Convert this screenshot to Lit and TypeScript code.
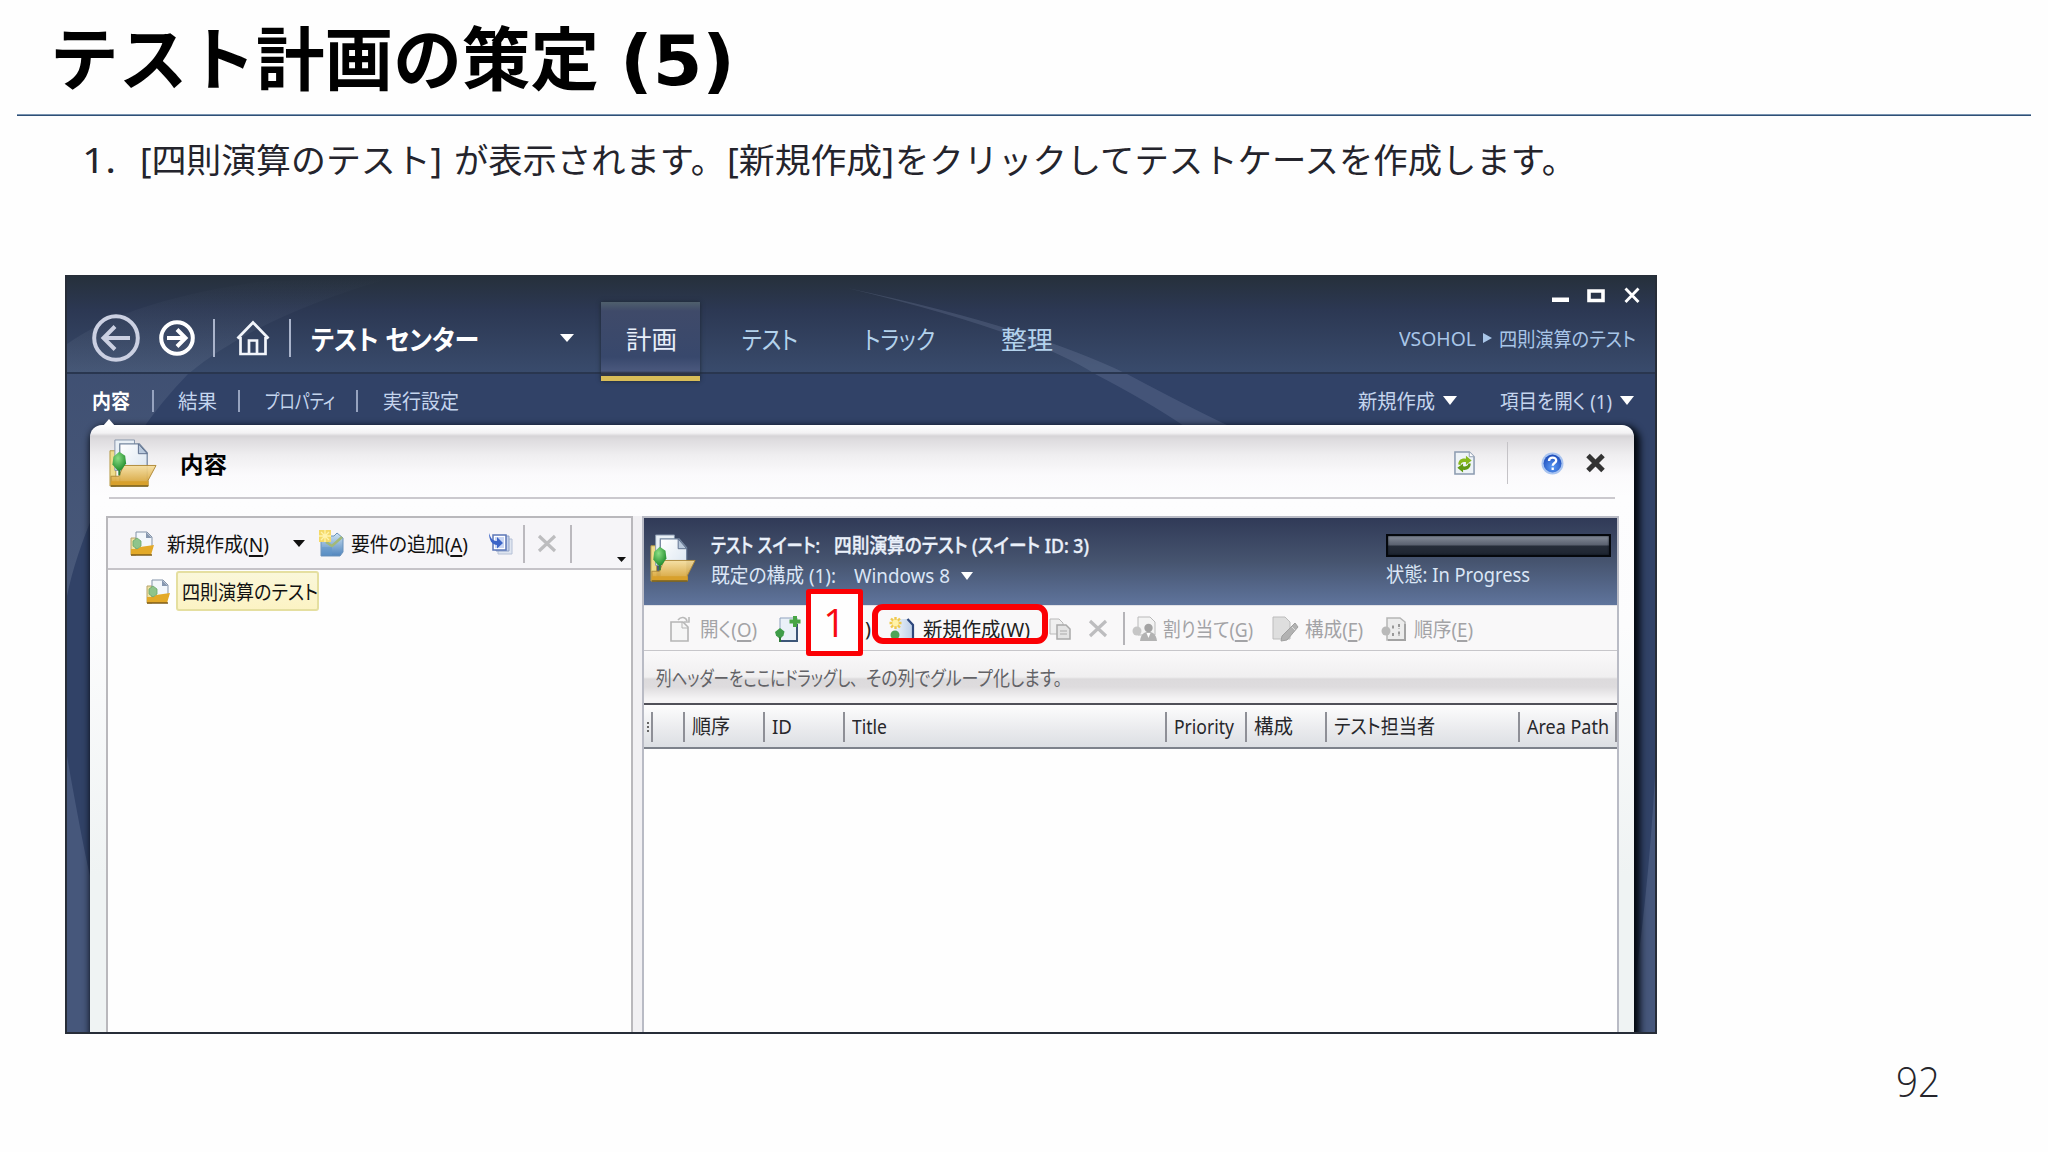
import { LitElement, html, svg, css, nothing } from "lit";
import { customElement, property } from "lit/decorators.js";

/** A single line of text squeezed or stretched to an exact width. */
@customElement("fit-text")
class FitText extends LitElement {
  @property({ type: Number }) w = 0;
  @property({ type: Number }) gap = 0;
  static styles = css`
    :host { display: block; flex: none; white-space: nowrap; }
    .run { display: inline-block; transform-origin: 0 50%; white-space: pre; }
  `;
  render() {
    return html`<span class="run"><slot></slot></span>`;
  }
  firstUpdated() {
    this.style.width = `${this.w}px`;
    this.style.marginLeft = `${this.gap}px`;
    const run = this.renderRoot.querySelector(".run") as HTMLElement;
    const natural = run.getBoundingClientRect().width;
    if (natural > 0) run.style.transform = `scaleX(${this.w / natural})`;
  }
}

const folder = svg`
  <defs>
    <linearGradient id="fg" x1="0" y1="0" x2="0" y2="1"><stop offset="0" stop-color="#f6dfa0"/><stop offset="1" stop-color="#d39a26"/></linearGradient>
    <linearGradient id="pg" x1="0" y1="0" x2="1" y2="1"><stop offset="0" stop-color="#ffffff"/><stop offset="1" stop-color="#d5e2ef"/></linearGradient>
    <radialGradient id="gg" cx=".4" cy=".35" r=".7"><stop offset="0" stop-color="#8ade84"/><stop offset="1" stop-color="#1e8a2c"/></radialGradient>
  </defs>
  <path d="M1 12h6v36H1z" fill="#efdc8c" stroke="#b59a45"/>
  <path d="M6 1h20v5H11v26H6z" fill="#e9f0f6" stroke="#8595ab"/>
  <path d="M11 5h20l8 9v30H11z" fill="url(#pg)" stroke="#74869f" stroke-width="1.3"/>
  <path d="M30 5v10h9z" fill="#b9c9dc" stroke="#5c6f8c"/>
  <path d="M2 38h8l5-11h33l-8 15v6H2z" fill="url(#fg)" fill-opacity=".93" stroke="#b08a3a"/>
  <path d="M2 43h38v5H2z" fill="#d8a02c"/>
  <path d="M2 48h38" stroke="#77601f" stroke-width="1.6"/>
  <path d="M10.500 30v7" stroke="#2f7f37" stroke-width="2"/>
  <path d="M10.500 13l6 4 1 8-5 7h-4l-5-6 1-8z" fill="url(#gg)"/>`;

const smallFolder = svg`
  <path d="M1 7h5v17H1z" fill="#eee3a4" stroke="#b8a468"/>
  <path d="M6 1h11l5 5v12H6z" fill="#f3f7fb" stroke="#8393a8"/>
  <path d="M16 1v6h6z" fill="#8798b0"/>
  <path d="M1 18h6l3-2 14-2-3 10H1z" fill="#e3a928"/>
  <path d="M1 24h21" stroke="#7e5d18" stroke-width="1.5"/>
  <path d="M7 7l4 3v5l-4 3-4-3v-5z" fill="#8fc48b" stroke="#6aa768" stroke-width=".8"/>`;

const cross = (c: string) => svg`<path d="M3 3L19 18M19 3L3 18" stroke=${c} stroke-width="3.2" fill="none"/>`;

const glyphs: Record<string, unknown> = {
  folder,
  smallFolder,
  back: svg`<circle cx="24" cy="24" r="21.8" fill="none" stroke="#cbd0e2" stroke-width="4"/><path d="M38 24H12M23 12.500L11.500 24L23 35.500" fill="none" stroke="#cbd0e2" stroke-width="4"/>`,
  forward: svg`<circle cx="18" cy="18" r="15.800" fill="none" stroke="#fff" stroke-width="4"/><path d="M8 18H26M18 9.500L26.500 18L18 26.500" fill="none" stroke="#fff" stroke-width="4"/>`,
  home: svg`<path d="M1.500 18.500L17 2.500L32.500 18.500M4.500 17V34H29.500V17M13 34V20.500H21V34" fill="none" stroke="#f2f5fb" stroke-width="2.700"/>`,
  refresh: svg`<path d="M1 1h15l5 5v18H1z" fill="#eef3f7" stroke="#8c9bb0" stroke-width="1.600"/><path d="M16 1v5h5" fill="#fff" stroke="#8c9bb0"/><path d="M4.500 14c0-5 4-7 8-6V5l6 5-6 4.500v-3c-3-.5-5 0-5.500 3z" fill="#86b81c"/><path d="M17.500 13c0 5-4 7.500-8 6.500v3l-6-5 6-4.500v3c3 .3 5-.3 5.500-3z" fill="#5f9a14"/>`,
  help: svg`<defs><radialGradient id="hg" cx=".5" cy=".7" r=".7"><stop offset="0" stop-color="#5a9af4"/><stop offset="1" stop-color="#1b49b8"/></radialGradient></defs><circle cx="11.500" cy="11.500" r="11" fill="#a9c4f0"/><circle cx="11.500" cy="11.500" r="9" fill="url(#hg)"/><path d="M8 9c0-4.500 7.500-4.500 7.200-.2-.2 2.200-3.500 2.400-3.500 5M11.700 15.500v2.500" fill="none" stroke="#fff" stroke-width="2.300"/>`,
  closePanel: svg`<path d="M2 2.500L17 17.500M17 2.500L2 17.500" stroke="#333" stroke-width="5"/>`,
  requirement: svg`<defs><linearGradient id="rg" x1="0" y1="0" x2="0" y2="1"><stop offset="0" stop-color="#cfe3f2"/><stop offset="1" stop-color="#4f84bd"/></linearGradient></defs><path d="M2 6h13l3-3 6 5v14l-3 4H2z" fill="url(#rg)" stroke="#6b93bb"/><path d="M7 12l6 4 10-9" stroke="#a3b978" stroke-width="2.500" fill="none"/><path d="M0 0h12v12H0z" fill="#f4d968"/><path d="M6 0v12M0 6h12M2 2l8 8M10 2l-8 8" stroke="#fff3ae" stroke-width="1.300"/><path d="M3 17h10v8H3z" fill="#5f96c9" fill-opacity=".5"/>`,
  stack: svg`<path d="M9 6h14v15H9z" fill="#dfe5f0" stroke="#b4c0d6"/><path d="M7 3h13v15H7z" fill="#c7d3ea" stroke="#8fa1c6"/><path d="M4 2h13v15H4z" fill="#fff" stroke="#5b76b6" stroke-width="1.500"/><path d="M6 4h9v11H6z" fill="#c9d6f4"/><path d="M0 0c2 6 4 8 8 8V4l6 6-6 5.500V12C3 12 0 7 0 0z" fill="#3c65c8"/>`,
  cross: cross("#bdbdbf"),
  open: svg`<path d="M1 6h12l5 5v14H1z" fill="#f6f6f6" stroke="#b5b5b5" stroke-width="1.600"/><path d="M12 6v6h6" fill="none" stroke="#b5b5b5"/><path d="M8 4c3-4 8-3 9 1M19 1v5h-5" fill="none" stroke="#b9b9b9" stroke-width="1.600"/>`,
  addCase: svg`<path d="M5 2h17v23H5z" fill="#eaf1f8" stroke="#8fa3be"/><path d="M22 8v17H6" stroke="#3d5678" stroke-width="2" fill="none"/><path d="M20 0v11M14.500 5.500h11" stroke="#49a645" stroke-width="4"/><path d="M5 12l4.500 3.500-1 4-3.500 3.500-4-3.500L0 16z" fill="#3f9d49"/><path d="M5 21v5" stroke="#2f7a38" stroke-width="2"/>`,
  newCase: svg`<defs><linearGradient id="ng"><stop offset="0" stop-color="#eef4fb"/><stop offset="1" stop-color="#b9cce6"/></linearGradient></defs><path d="M6 2h13l6 6v17H6z" fill="url(#ng)"/><path d="M18.500 2l5.500 6v17" stroke="#2e477c" stroke-width="2.200" fill="none"/><path d="M6.500 0v12M.500 6h12M2 1.500l9 9M11 1.500l-9 9" stroke="#f0c94c" stroke-width="2.400"/><circle cx="6.500" cy="6" r="3.200" fill="#fff2a8"/><circle cx="6" cy="18" r="4.500" fill="#4da457"/>`,
  copy: svg`<path d="M1 1h9l4 4v11H1z" fill="#efefef" stroke="#b9b9b9"/><path d="M8 7h9l4 4v10H8z" fill="#e4e4e4" stroke="#a9a9a9" stroke-width="1.500"/><path d="M11 13h7M11 16h7" stroke="#aaa"/>`,
  assign: svg`<path d="M6 1h12l5 5v13H6z" fill="#f3f3f3" stroke="#b9b9b9"/><circle cx="5" cy="15" r="4.500" fill="#c6c6c6"/><circle cx="16.500" cy="12" r="4.200" fill="#a3a3a3"/><path d="M8 25c1-8 5-9 8.500-9s7.500 1 8.500 9z" fill="#b3b3b3"/><path d="M14.500 17l2 5 2-5z" fill="#fff"/>`,
  configure: svg`<path d="M1 1h12l5 5v17H1z" fill="#dedede" stroke="#bcbcbc"/><path d="M23 7l3 4-11 13-6 1 1-5z" fill="#b2b2b2" stroke="#a0a0a0"/><path d="M20 11l3 3" stroke="#ddd"/>`,
  order: svg`<path d="M6 2h13l5 4v18H6z" fill="#ececec" stroke="#b5b5b5" stroke-width="1.500"/><path d="M24 8v16H7" stroke="#a3a3a3" stroke-width="2" fill="none"/><circle cx="5" cy="15" r="4.500" fill="#b9b9b9"/><path d="M12 9.500v4M18 8v4.500M12 17v4M18 15.500v4.500" stroke="#999" stroke-width="2" stroke-dasharray="3 1" fill="none"/>`,
  down: svg`<path d="M0 0H14L7 9z" fill="currentColor"/>`,
  right: svg`<path d="M0 0V11L10 5.500z" fill="currentColor"/>`,
  min: svg`<path d="M0 10.500H17V15H0z" fill="#fff"/>`,
  max: svg`<path d="M2 4H16V13.500H2z" fill="none" stroke="#fff" stroke-width="3.600"/>`,
  closeWin: svg`<path d="M1.500 1.500L14.500 15M14.500 1.500L1.500 15" stroke="#fff" stroke-width="2.800"/>`,
};

/** Named pictogram with its design box. */
@customElement("ui-icon")
class UiIcon extends LitElement {
  @property() name = "";
  @property({ type: Number }) w = 24;
  @property({ type: Number }) h = 24;
  @property({ type: Number }) gap = 0;
  @property() box = "";
  static styles = css`
    :host { display: block; flex: none; }
    svg { display: block; overflow: visible; }
  `;
  willUpdate() {
    this.style.marginLeft = `${this.gap}px`;
  }
  render() {
    return html`<svg width=${this.w} height=${this.h} viewBox=${this.box || `0 0 ${this.w} ${this.h}`} preserveAspectRatio="none">${glyphs[this.name]}</svg>`;
  }
}

@customElement("app-root")
class AppRoot extends LitElement {
  static styles = css`
    :host {
      display: block; width: 2048px; height: 1152px; background: #fefefe; overflow: hidden; position: relative;
      font-family: "Noto Sans", "Noto Sans CJK JP", sans-serif; font-size: 20px; color: #111;
    }
    * { box-sizing: border-box; }
    u { text-underline-offset: 3px; text-decoration-thickness: 1.5px; }
    .row { display: flex; align-items: center; }
    .title { height: 114px; padding: 8px 0 0 50px; font: 700 69px/114px "DejaVu Sans", "Noto Sans CJK JP", sans-serif; color: #000; }
    .rule { height: 2px; margin: 0 17px; background: #2f4f76; border-top: 1px solid #7893b0; }
    .step { height: 88px; padding-left: 82px; font: 400 34px/88px "Noto Sans", "Noto Sans CJK JP", sans-serif; color: #24242c; }
    .window {
      position: relative; margin: 71px 0 0 65px; width: 1592px; height: 759px; overflow: hidden;
      border: solid #272d38; border-width: 1px 2px 2px 2px; background: #314267; color: #e3ebf8;
      font-feature-settings: "palt";
    }
    .sweep { position: absolute; left: 0; top: 0; }
    .chrome { position: relative; height: 149px; }
    .bar { height: 98px; position: relative; }
    .brand { font-size: 27px; font-weight: 700; color: #fff; }
    .vsep { flex: none; width: 2px; height: 38px; background: #aab4cb; }
    .nav { height: 98px; padding: 26px 0 0 25px; align-items: center; }
    .tab { flex: none; width: 99px; height: 79px; margin: 0 0 0 27px; padding: 2px 0 0 25px; border-bottom: 5px solid #d9bd58; line-height: 71px; color: #e8effb;
      background: linear-gradient(#4f5f6c 0, #3f4a69 9px, #38486c 55px, #4a587d 69px, #2f3546 71px, #2f3546 74px);
      box-shadow: 0 0 4px #1c2631; align-self: flex-start; }
    .nav { font-size: 25px; color: #b3d2ec; }
    .path { font-size: 20px; color: #a9c6e8; }
    .winbtns { position: absolute; right: 15px; top: 11px; display: flex; }
    .sub { height: 51px; padding: 2px 0 0 25px; font-size: 20px; color: #c5d5ee; }
    .sub .on { font-weight: 700; color: #fff; }
    .sub .vsep { height: 22px; background: #96a3bf; }
    .white { color: #fff; }
    .panel { position: relative; margin-left: 23px; width: 1544px; height: 620px; border-radius: 12px 12px 0 0;
      background: linear-gradient(#fff 0, #f3f2f4 8px, #d6d4d7 11px, #dedcdf 15px, #efeef0 30px, #fbfafc 50px, #fdfdfe 72px, #fcfcfd 200px, #eff3f3 450px);
      box-shadow: 3px 4px 7px 3px #03080f; color: #111; }
    .pointer { position: absolute; left: 13px; top: -6px; width: 12px; height: 7px; background: #fff; clip-path: polygon(50% 0, 100% 100%, 0 100%); }
    .head { height: 74px; margin: 0 19px 0 19px; border-bottom: 2px solid #cbc9ce; padding-top: 4px; }
    .head .name { font-size: 22.500px; font-weight: 700; color: #000; }
    .head .vsep { width: 1px; height: 42px; background: #c5c3c7; }
    .panes { display: flex; margin: 17px 0 0 16px; height: 532px; background: #f1f0f3; width: 1513px; justify-content: space-between; }
    .left { width: 527px; border: 2px solid #b9b8bc; border-bottom: 0; background: #fefefe; }
    .tools { height: 52px; background: #f6f5f8; border-bottom: 2px solid #c5c3c8; padding: 1px 0 0 22px; }
    .tools .vsep { height: 38px; background: #bbb9be; width: 2px; }
    .tree { padding: 1px 0 0 38px; }
    .chosen { margin-left: 5px; width: 143px; height: 40px; padding-left: 4px; line-height: 39px; border: 2px solid #e5dfa0; border-radius: 3px; background: linear-gradient(#faf7da, #fcf3c4); }
    .right { width: 977px; border: solid #b9bbc5; border-width: 2px 2px 0 2px; background: #fefefe; }
    .suite { height: 87px; padding-left: 6px; color: #eaf0fa; background: linear-gradient(#303a57, #46546f 50%, #5f749c); display: flex; }
    .suite .pic { height: 80px; }
    .lines { margin-left: 15px; width: 660px; padding-top: 15px; }
    .lines .row { height: 26px; line-height: 26px; }
    .lines .row + .row { height: 34px; color: #dbe6f6; }
    .strong { font-weight: 500; -webkit-text-stroke: .35px currentColor; }
    .state { margin-left: 15px; padding-top: 16px; color: #dbe6f6; line-height: 36px; }
    .gauge { width: 225px; height: 23px; border: 2px solid #05080d; background: linear-gradient(#858c99, #59606e 48%, #262d39 52%, #1e2531); box-shadow: inset 0 0 2px #0b1019; }
    .actions { height: 46px; padding: 1px 0 0 26px; background: #f9f8f9; border-top: 1px solid #e1e1e6; border-bottom: 1px solid #c7c6ca; color: #a3a3a6; }
    .actions .vsep { width: 2px; height: 33px; background: #b5b4b8; }
    .dark { color: #222; }
    .group { height: 54px; padding-left: 12px; color: #626266; border-bottom: 2px solid #505058; background: linear-gradient(#faf9fa, #f0eff0 26px, #dcdadc 28px, #dedcde 36px, #f5f4f5 48px); }
    .cols { height: 44px; padding-top: 1px; border-bottom: 2px solid #7d828b; background: linear-gradient(#fdfdfd, #e9eaed 60%, #dcdfe3); color: #27272b; line-height: 33px; }
    .cols .vsep { height: 30px; background: #8e8f96; }
    .grip { flex: none; margin-left: 3px; width: 2px; height: 10px; background: repeating-linear-gradient(#666 0 2px, transparent 2px 4px); }
    .badge { position: absolute; left: 806px; top: 589px; width: 57px; height: 67px; border: 5px solid #fb0004; border-radius: 3px; background: #fefefe; color: #f80a10; font: 400 39px/56px "Open Sans", sans-serif; text-align: center; }
    .ring { position: absolute; left: 872px; top: 604px; width: 176px; height: 40px; border: 6px solid #fb0004; border-radius: 11px; }
    .page { margin: 17px 0 0 1896px; font: 300 43px/60px "Open Sans", "Noto Sans", sans-serif; color: #25252b; }
  `;

  private sep(gap: number) {
    return html`<ui-icon name="" w="0" h="0" gap=${gap}></ui-icon><span class="vsep"></span>`;
  }

  private col(gap: number, label: string, w: number) {
    return html`${this.sep(gap)}${label ? html`<fit-text gap="7" w=${w}>${label}</fit-text>` : nothing}`;
  }

  render() {
    return html`
      <div class="title row"><fit-text w="549">テスト計画の策定</fit-text><fit-text gap="21" w="115">(5)</fit-text></div>
      <div class="rule"></div>
      <div class="step row"><fit-text w="34">1.</fit-text><fit-text gap="24" w="302">[四則演算のテスト]</fit-text><fit-text gap="12" w="271">が表示されます。</fit-text><fit-text gap="2" w="167">[新規作成]</fit-text><fit-text gap="1" w="681">をクリックしてテストケースを作成します。</fit-text></div>

      <div class="window">
        <svg class="sweep" width="1588" height="756">
          <defs>
            <linearGradient id="top" x1="0" y1="0" x2="0" y2="1"><stop offset="0" stop-color="#26303b"/><stop offset=".35" stop-color="#2c3853"/><stop offset="1" stop-color="#394b6c"/></linearGradient>
            <linearGradient id="fade" x1="0" y1="0" x2="0" y2="1"><stop offset="0" stop-color="#8d9bb0" stop-opacity="0"/><stop offset=".3" stop-color="#8d9bb0" stop-opacity=".16"/><stop offset="1" stop-color="#8d9bb0" stop-opacity=".26"/></linearGradient>
          </defs>
          <rect width="1588" height="97" fill="url(#top)"/>
          <path d="M0 68Q60 25 190 6L330 0Q190 40 121 98Q70 150 30 230Q8 280 0 320z" fill="url(#fade)"/>
          <path d="M0 480Q14 560 23 600V756H0z" fill="#46577b"/>
          <path d="M780 12Q960 50 1060 98Q1120 130 1162 150H1117Q1080 125 1028 98Q960 55 780 12z" fill="#8794b4" fill-opacity=".22"/>
          <path d="M1588 500Q1580 640 1560 756H1588z" fill="#46577b"/>
          <rect y="96" width="1588" height="2" fill="#29364f"/>
        </svg>
        <div class="chrome">
          <div class="winbtns">
            <ui-icon name="min" w="17" h="17"></ui-icon><ui-icon name="max" w="18" h="17" gap="18"></ui-icon><ui-icon name="closeWin" w="16" h="17" gap="19"></ui-icon>
          </div>
          <div class="bar nav row">
            <ui-icon name="back" w="48" h="48"></ui-icon>
            <ui-icon name="forward" w="36" h="36" gap="19"></ui-icon>
            ${this.sep(18)}
            <ui-icon name="home" w="34" h="36" gap="21"></ui-icon>
            ${this.sep(19)}
            <fit-text class="brand" gap="20" w="168">テスト センター</fit-text>
            <ui-icon name="down" w="14" h="8" gap="81" box="0 0 14 9" class="white"></ui-icon>
            <div class="tab"><fit-text w="51">計画</fit-text></div>
            <fit-text gap="42" w="56">テスト</fit-text>
            <fit-text gap="66" w="71">トラック</fit-text>
            <fit-text gap="66" w="52">整理</fit-text>
            <fit-text class="path" gap="346" w="77">VSOHOL</fit-text>
            <ui-icon name="right" w="9" h="10" gap="7" box="0 0 10 11" class="path"></ui-icon>
            <fit-text class="path" gap="7" w="137">四則演算のテスト</fit-text>
          </div>
          <div class="sub row">
            <fit-text class="on" w="38">内容</fit-text>${this.sep(22)}
            <fit-text gap="24" w="39">結果</fit-text>${this.sep(21)}
            <fit-text gap="25" w="70">プロパティ</fit-text>${this.sep(21)}
            <fit-text gap="25" w="76">実行設定</fit-text>
            <fit-text gap="899" w="77">新規作成</fit-text>
            <ui-icon name="down" w="14" h="9" gap="8" class="white"></ui-icon>
            <fit-text gap="43" w="112">項目を開く (1)</fit-text>
            <ui-icon name="down" w="14" h="9" gap="8" class="white"></ui-icon>
          </div>
        </div>
        <div class="panel">
          <div class="pointer"></div>
          <div class="head row">
            <ui-icon name="folder" w="48" h="49" box="0 0 49 50"></ui-icon>
            <fit-text class="name" gap="23" w="47">内容</fit-text>
            <ui-icon name="refresh" w="21" h="24" gap="1227" box="0 0 22 25"></ui-icon>
            ${this.sep(32)}
            <ui-icon name="help" w="23" h="23" gap="33"></ui-icon>
            <ui-icon name="closePanel" w="19" h="20" gap="22"></ui-icon>
          </div>
          <div class="panes">
            <div class="left">
              <div class="tools row">
                <ui-icon name="smallFolder" w="25" h="25" gap="0"></ui-icon>
                <fit-text gap="12" w="102">新規作成(<u>N</u>)</fit-text>
                <ui-icon name="down" w="12" h="7" gap="24" box="0 0 14 9"></ui-icon>
                <ui-icon name="requirement" w="25" h="27" gap="14"></ui-icon>
                <fit-text gap="7" w="117">要件の追加(<u>A</u>)</fit-text>
                <ui-icon name="stack" w="23" h="22" gap="21"></ui-icon>
                ${this.sep(11)}
                <ui-icon name="cross" w="22" h="21" gap="11"></ui-icon>
                ${this.sep(12)}
                <ui-icon name="down" w="9" h="5" gap="45" box="0 -29 14 9"></ui-icon>
              </div>
              <div class="tree row">
                <ui-icon name="smallFolder" w="25" h="25"></ui-icon>
                <div class="chosen"><fit-text w="136">四則演算のテスト</fit-text></div>
              </div>
            </div>
            <div class="right">
              <div class="suite">
                <div class="row pic"><ui-icon name="folder" w="46" h="49" box="0 0 49 50"></ui-icon></div>
                <div class="lines">
                  <div class="row strong"><fit-text w="109">テスト スイート:</fit-text><fit-text gap="14" w="255">四則演算のテスト (スイート ID: 3)</fit-text></div>
                  <div class="row"><fit-text w="125">既定の構成 (1):</fit-text><fit-text gap="18" w="96">Windows 8</fit-text><ui-icon name="down" w="12" h="8" gap="11" box="0 0 14 9" class="white"></ui-icon></div>
                </div>
                <div class="state"><div class="gauge"></div><fit-text w="144">状態: In Progress</fit-text></div>
              </div>
              <div class="actions row">
                <ui-icon name="open" w="20" h="26"></ui-icon>
                <fit-text gap="10" w="57">開く(<u>O</u>)</fit-text>
                <ui-icon name="addCase" w="26" h="26" gap="18"></ui-icon>
                <fit-text class="dark" gap="64" w="6">)</fit-text>
                <ui-icon name="newCase" w="25" h="23" gap="18"></ui-icon>
                <fit-text class="dark" gap="9" w="107">新規作成(<u>W</u>)</fit-text>
                <ui-icon name="copy" w="22" h="22" gap="19"></ui-icon>
                <ui-icon name="cross" w="22" h="21" gap="16"></ui-icon>
                ${this.sep(14)}
                <ui-icon name="assign" w="25" h="26" gap="7"></ui-icon>
                <fit-text gap="6" w="90">割り当て(<u>G</u>)</fit-text>
                <ui-icon name="configure" w="26" h="26" gap="19"></ui-icon>
                <fit-text gap="7" w="58">構成(<u>F</u>)</fit-text>
                <ui-icon name="order" w="25" h="26" gap="18"></ui-icon>
                <fit-text gap="8" w="59">順序(<u>E</u>)</fit-text>
              </div>
              <div class="group row"><fit-text w="202">列ヘッダーをここにドラッグし、</fit-text><fit-text gap="8" w="196">その列でグループ化します。</fit-text></div>
              <div class="cols row">
                <div class="grip"></div>
                ${this.sep(2)}
                ${this.col(30, "順序", 38)}
                ${this.col(33, "ID", 20)}
                ${this.col(51, "Title", 35)}
                ${this.col(278, "Priority", 60)}
                ${this.col(11, "構成", 39)}
                ${this.col(32, "テスト担当者", 101)}
                ${this.col(83, "Area Path", 82)}
                ${this.col(6, "", 0)}
              </div>
            </div>
          </div>
        </div>
      </div>
      <div class="ring"></div>
      <div class="badge">1</div>
      <div class="page"><fit-text w="44">92</fit-text></div>
    `;
  }
}
